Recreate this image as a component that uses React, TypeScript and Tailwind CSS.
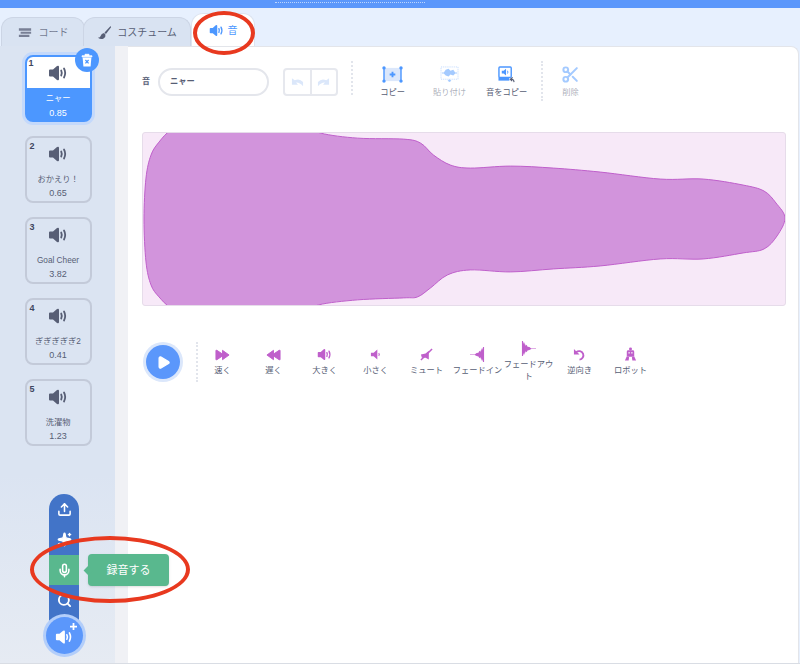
import { Scissors, Search, Sparkles, Upload, Mic, Play } from "lucide-react";

const jp = "font-['Liberation_Sans','Noto_Sans_CJK_JP',sans-serif]";

const sounds = [
  { id: 1, name: "ニャー", time: "0.85", active: true },
  { id: 2, name: "おかえり！", time: "0.65" },
  { id: 3, name: "Goal Cheer", time: "3.82" },
  { id: 4, name: "ぎぎぎぎぎ2", time: "0.41" },
  { id: 5, name: "洗濯物", time: "1.23" },
];

// outline of the waveform, smoothed below; the flat parts are clipped by the viewBox
const wavePoints = [
  [143, 219], [145, 178], [150, 155], [158, 142], [170, 130], [190, 122], [300, 124], [320, 133], [357, 138], [403, 139], [420, 143],
  [433, 155], [450, 165], [470, 168], [510, 166], [553, 168], [600, 172], [660, 179], [703, 179], [743, 185], [764, 191],
  [776, 203], [785, 218], [777, 236], [764, 249], [743, 253], [703, 259], [660, 259], [600, 266], [553, 269], [510, 272],
  [470, 270], [447, 275], [430, 288], [417, 297], [403, 298], [357, 300], [318, 305], [300, 314], [190, 316], [170, 308], [158, 297],
  [150, 285], [145, 262],
];

const smoothPath = (pts: number[][]) => {
  let d = `M${pts[0][0]} ${pts[0][1]}`;
  for (let i = 0; i < pts.length; i++) {
    const p0 = pts[(i - 1 + pts.length) % pts.length];
    const p1 = pts[i];
    const p2 = pts[(i + 1) % pts.length];
    const p3 = pts[(i + 2) % pts.length];
    d += ` C${p1[0] + (p2[0] - p0[0]) / 6} ${p1[1] + (p2[1] - p0[1]) / 6} ${p2[0] - (p3[0] - p1[0]) / 6} ${p2[1] - (p3[1] - p1[1]) / 6} ${p2[0]} ${p2[1]}`;
  }
  return d + "Z";
};

const SpeakerIcon = ({ className = "", color = "#575e75" }: { className?: string; color?: string }) => (
  <svg viewBox="0 0 20 20" className={className}>
    <path d="M1 7.5 Q1 6.5 2 6.5 H5 L9 3 Q11 2 11 4 V16 Q11 18 9 17 L5 13.5 H2 Q1 13.5 1 12.5 Z" fill={color} />
    <path d="M13.2 7.5 Q14.4 10 13.2 12.5" fill="none" stroke={color} strokeWidth="1.8" strokeLinecap="round" />
    <path d="M16 5.5 Q18.4 10 16 14.5" fill="none" stroke={color} strokeWidth="1.8" strokeLinecap="round" />
  </svg>
);

const SoundCard = ({ id, name, time, active }: { id: number; name: string; time: string; active?: boolean }) => {
  if (active) {
    return (
      <div className="relative w-[67px] h-[67px] rounded-lg border-2 border-[#4c97ff] bg-[#4c97ff] shadow-[0_0_0_3px_#c4d9fb] flex flex-col">
        <div className="relative h-[31px] bg-white rounded-t-md flex items-center justify-center">
          <span className="absolute left-[2px] top-0 text-[9px] font-bold text-[#3f4660]">{id}</span>
          <SpeakerIcon className="w-5 h-5 mt-[1px]" />
        </div>
        <div className="flex-1 flex flex-col items-center pt-[4px] text-[8.25px] leading-[14px] text-white">
          <span>{name}</span>
          <span className="text-[9px]">{time}</span>
        </div>
        <div className="absolute -right-[9px] -top-[9px] w-6 h-6 rounded-full bg-[#4c97ff] flex items-center justify-center">
          <svg viewBox="0 0 16 16" className="w-4 h-4">
            <path d="M3 3.8 H13 V4.8 H3Z M6 3.8 V2.3 H10 V3.8" fill="#fff" stroke="#fff" strokeWidth="0.8" />
            <path d="M3.6 5.6 H12.4 L11.6 14.5 H4.4 Z" fill="#fff" />
            <path d="M6.4 8 L9.6 11.4 M9.6 8 L6.4 11.4" stroke="#4c97ff" strokeWidth="1.3" />
          </svg>
        </div>
      </div>
    );
  }
  return (
    <div className="relative w-[67px] h-[67px] rounded-lg border-2 border-[#c3cad9] flex flex-col items-center">
      <span className="absolute left-[3px] top-[2px] text-[9px] font-bold text-[#3f4660]">{id}</span>
      <SpeakerIcon className="w-5 h-5 mt-[6px]" />
      <span className="mt-[10px] text-[8.25px] leading-[12px] text-[#575e75] whitespace-nowrap">{name}</span>
      <span className="mt-[1px] text-[9px] leading-[12px] text-[#575e75]">{time}</span>
    </div>
  );
};

const ToolButton = ({ label, dim, children }: { label: string; dim?: boolean; children: React.ReactNode }) => (
  <div className="w-[57px] flex flex-col items-center">
    <div className="h-[22px] flex items-center justify-center">{children}</div>
    <span className={`mt-[4px] text-[8.25px] leading-[12px] whitespace-nowrap ${dim ? "text-[#575e75]/50" : "text-[#575e75]"}`}>
      {label}
    </span>
  </div>
);

const purple = "#bf5fcb";

const effects: { label: string; icon: React.ReactNode }[] = [
  {
    label: "速く",
    icon: (
      <svg viewBox="0 0 16 12" className="w-[15px] h-3">
        <path d="M1 1 H2 L8 5 V1 L15 6 L8 11 V7 L2 11 H1Z" fill={purple} stroke={purple} strokeLinejoin="round" />
      </svg>
    ),
  },
  {
    label: "遅く",
    icon: (
      <svg viewBox="0 0 16 12" className="w-[15px] h-3">
        <path d="M15 1 H14 L8 5 V1 L1 6 L8 11 V7 L14 11 H15Z" fill={purple} stroke={purple} strokeLinejoin="round" />
      </svg>
    ),
  },
  { label: "大きく", icon: <SpeakerIcon className="w-[15px] h-[15px]" color={purple} /> },
  {
    label: "小さく",
    icon: (
      <svg viewBox="0 0 12 14" className="w-[11px] h-[13px]">
        <path d="M1 5 H4 L8 1.5 V12.5 L4 9 H1Z" fill={purple} />
        <path d="M9.5 5.5 Q10.8 7 9.5 8.5" fill="none" stroke={purple} strokeWidth="1.2" />
      </svg>
    ),
  },
  {
    label: "ミュート",
    icon: (
      <svg viewBox="0 0 14 14" className="w-[13px] h-[13px]">
        <path d="M1 7 L6 6 L9.5 3 V12.5 L6 10.5 H2Z" fill={purple} />
        <path d="M1 13 L13 1" stroke={purple} strokeWidth="1.6" />
      </svg>
    ),
  },
  {
    label: "フェードイン",
    icon: (
      <svg viewBox="0 0 16 16" className="w-[15px] h-[15px]">
        <path d="M0 8 H5 L7 6.5 L9 6 L10 4 L11 5 L12.5 1 V4 L14 0 H15 V16 H14 L12.5 12 V15 L11 11 L10 12 L9 10 L7 9.5 L5 8.6 H0Z" fill={purple} />
      </svg>
    ),
  },
  {
    label: "フェードアウト",
    icon: (
      <svg viewBox="0 0 16 16" className="w-[15px] h-[15px]">
        <path d="M16 8 H11 L9 6.5 L7 6 L6 4 L5 5 L3.5 1 V4 L2 0 H1 V16 H2 L3.5 12 V15 L5 11 L6 12 L7 10 L9 9.5 L11 8.6 H16Z" fill={purple} />
      </svg>
    ),
  },
  {
    label: "逆向き",
    icon: (
      <svg viewBox="0 0 14 14" className="w-[13px] h-[13px]">
        <path d="M1 1 V7 H7Z" fill={purple} />
        <path d="M3.5 4.5 A4.6 4.6 0 1 1 7 12.5" fill="none" stroke={purple} strokeWidth="2" />
      </svg>
    ),
  },
  {
    label: "ロボット",
    icon: (
      <svg viewBox="0 0 14 16" className="w-[13px] h-[15px]">
        <circle cx="7" cy="2" r="1.6" fill={purple} />
        <rect x="3" y="3.5" width="8" height="7" rx="1.5" fill={purple} />
        <rect x="4.8" y="5.5" width="1.4" height="1.4" fill="#fff" />
        <rect x="7.8" y="5.5" width="1.4" height="1.4" fill="#fff" />
        <path d="M3 10 L1 14.5 H5 L5.5 11 Z M11 10 L13 14.5 H9 L8.5 11 Z" fill={purple} />
      </svg>
    ),
  },
];

export default function App() {
  return (
    <div className={`relative w-[800px] h-[664px] overflow-hidden bg-[#e7f0fe] flex flex-col ${jp}`}>
      <div className="h-2 bg-[#5b97fb] pl-[275px] shrink-0">
        <div className="w-[150px] h-[3px] border-b border-dotted border-white/60" />
      </div>

      {/* tabs */}
      <div className="h-[38px] flex items-end pl-[1px] shrink-0">
        <div className="w-[84px] h-[29px] bg-[#d9e3f2] border border-b-0 border-[#ccd5e5] rounded-t-xl flex items-center justify-center gap-[7px] text-[10px] text-[#575e75]/80">
          <svg viewBox="0 0 16 12" className="w-[14px] h-[11px]">
            <path d="M1 1 H15 V4 H1Z M3 5 H15 V7.5 H3Z M1 8.5 H13 V11 H1Z" fill="#575e75" opacity="0.75" />
          </svg>
          <span>コード</span>
        </div>
        <div className="w-[108px] -ml-[2px] h-[29px] bg-[#d9e3f2] border border-b-0 border-[#ccd5e5] rounded-t-xl flex items-center justify-center gap-[5px] text-[10px] text-[#575e75]">
          <svg viewBox="0 0 16 16" className="w-[15px] h-[15px]">
            <path d="M14.5 1 L8 8 L9.5 9.5 L15 2.5Z" fill="#575e75" />
            <path d="M7.5 8.5 Q4.5 9 4 11.5 Q3.5 13.5 1 13.5 Q4 16 7 14.5 Q9.5 13 9 10Z" fill="#575e75" />
          </svg>
          <span>コスチューム</span>
        </div>
        <div className="w-[64px] h-[33px] bg-white border border-b-0 border-[#dde4f0] rounded-t-xl flex items-center justify-center gap-[4px] text-[10px] text-[#4c97ff]">
          <SpeakerIcon className="w-[15px] h-[15px]" color="#4c97ff" />
          <span>音</span>
        </div>
      </div>

      <div className="flex-1 flex min-h-0 border-b border-[#d9dde4]">
        {/* sound list */}
        <div className="relative w-[115px] bg-[#dbe4f2] flex flex-col items-center gap-[14px] pt-[9px] pl-[1px] shrink-0">
          {sounds.map((s) => (
            <SoundCard key={s.id} {...s} />
          ))}
          <div className="absolute left-0 right-0 bottom-0 h-[190px] bg-gradient-to-b from-transparent to-[#e6ebf3]" />
        </div>
        <div className="w-[13px] bg-[#f0f1f5] shrink-0" />

        {/* editor */}
        <div className="flex-1 bg-white border-t border-r border-[#e3e5ea] rounded-tr-lg mr-[1px] pl-[14px] pr-[12px] pt-[14px] flex flex-col">
          <div className="h-[50px] flex items-start">
            <div className="flex items-center h-[36px] mt-[3px]">
              <span className="text-[8px] font-bold text-[#575e75] w-[16px]">音</span>
              <div className="w-[111px] h-7 rounded-full border-2 border-[#e4e6ec] pl-[10px] flex items-center text-[8.25px] font-bold text-[#575e75]">
                ニャー
              </div>
              <div className="ml-[14px] w-[55px] h-7 rounded border-2 border-[#e6e8ee] flex">
                <div className="flex-1 border-r-2 border-[#e6e8ee] flex items-center justify-center">
                  <svg viewBox="0 0 14 10" className="w-[13px] h-[10px]">
                    <path d="M1 1 L4 3.2 Q9 0.5 13 5 L13 9.5 Q9 5 5.5 5.5 L7.5 8 H1Z" fill="#dbe7fa" />
                  </svg>
                </div>
                <div className="flex-1 flex items-center justify-center">
                  <svg viewBox="0 0 14 10" className="w-[13px] h-[10px] -scale-x-100">
                    <path d="M1 1 L4 3.2 Q9 0.5 13 5 L13 9.5 Q9 5 5.5 5.5 L7.5 8 H1Z" fill="#dbe7fa" />
                  </svg>
                </div>
              </div>
            </div>
            <div className="ml-[13px] h-[34px] border-l-2 border-dotted border-[#e2e5ec]" />
            <div className="ml-[11px] flex">
              <ToolButton label="コピー">
                <svg viewBox="0 0 22 18" className="w-[21px] h-[17px] mt-[4px]">
                  <rect x="2" y="2" width="18" height="14" fill="#dbe7fb" />
                  <path d="M2 2 V16 M20 2 V16" stroke="#4c97ff" strokeWidth="1.5" />
                  <circle cx="2" cy="2" r="1.8" fill="#4c97ff" />
                  <circle cx="20" cy="2" r="1.8" fill="#4c97ff" />
                  <circle cx="2" cy="16" r="1.8" fill="#4c97ff" />
                  <circle cx="20" cy="16" r="1.8" fill="#4c97ff" />
                  <path d="M11 6 V12 M8 9 H14" stroke="#4c97ff" strokeWidth="2" />
                </svg>
              </ToolButton>
              <ToolButton label="貼り付け" dim>
                <svg viewBox="0 0 20 18" className="w-[19px] h-[17px] mt-[4px] opacity-50">
                  <rect x="1" y="1" width="18" height="13" fill="none" stroke="#4c97ff" strokeWidth="0.7" strokeDasharray="1 1" />
                  <path d="M2 7 H4 L6 4 L9 3 L11 5 L14 4 L16 7 H18 V8 H16 L14 10 L11 9 L9 11 L6 10 L4 8 H2Z M10 14 L8 15.5 L10 17 L12 15.5Z" fill="#4c97ff" />
                </svg>
              </ToolButton>
              <ToolButton label="音をコピー">
                <svg viewBox="0 0 20 18" className="w-[19px] h-[17px] mt-[4px]">
                  <rect x="2" y="1" width="13" height="11" rx="1" fill="#fff" stroke="#4c97ff" strokeWidth="1.5" />
                  <path d="M5 5 H7 L9.5 3 V10 L7 8 H5Z" fill="#4c97ff" />
                  <path d="M11 5 Q12 6.5 11 8" stroke="#4c97ff" fill="none" />
                  <path d="M1.5 12 H13 V15.5 H1.5Z" fill="#4c97ff" />
                  <path d="M18 17 Q17.5 13.5 14.5 14 M16.5 12 L14 14 L16 16" stroke="#575e75" strokeWidth="1.2" fill="none" />
                </svg>
              </ToolButton>
            </div>
            <div className="ml-[6px] h-10 border-l-2 border-dotted border-[#e2e5ec]" />
            <div className="ml-[-1px]">
              <ToolButton label="削除" dim>
                <Scissors size={19} strokeWidth={2.5} className="text-[#4c97ff] opacity-50 mt-[4px]" />
              </ToolButton>
            </div>
          </div>

          {/* waveform */}
          <div className="mt-[21px] w-[644px] h-[174px] rounded-[3px] border border-[#e6dcea] bg-[#f7e9f8]">
            <svg viewBox="142 133 643 172" className="w-full h-full">
              <path d={smoothPath(wavePoints)} fill="#d294dc" stroke="#bf5fcb" strokeWidth="1" />
            </svg>
          </div>

          {/* effects */}
          <div className="mt-[35px] flex items-center">
            <div className="w-[34px] h-[34px] ml-[4px] rounded-full bg-[#5b97fb] shadow-[0_0_0_3px_#dbe7fb] flex items-center justify-center">
              <Play size={15} fill="#fff" className="text-white ml-[1px]" />
            </div>
            <div className="ml-[16px] h-10 border-l-2 border-dotted border-[#e2e5ec]" />
            <div className="flex items-center ml-[-1px]">
              {effects.map((e) => (
                <div key={e.label} className="w-[51px] flex flex-col items-center">
                  <div className="h-[15px] flex items-center justify-center">{e.icon}</div>
                  <span className="mt-[3px] text-[8.25px] leading-[12px] text-[#575e75] text-center">{e.label}</span>
                </div>
              ))}
            </div>
          </div>
        </div>
      </div>

      {/* add sound menu */}
      <div className="absolute left-[49px] top-[494px] w-[30px] h-[130px] rounded-t-full bg-[#4274c8] flex flex-col items-center text-white">
        <div className="h-[30px] flex items-center justify-center">
          <Upload size={15} strokeWidth={2.5} />
        </div>
        <div className="h-[31px] flex items-center justify-center">
          <Sparkles size={15} fill="#fff" />
        </div>
        <div className="h-[30px] w-full bg-[#59b88e] flex items-center justify-center">
          <Mic size={15} strokeWidth={2.5} />
        </div>
        <div className="h-[30px] flex items-center justify-center">
          <Search size={15} strokeWidth={3} />
        </div>
      </div>
      <div className="absolute left-[88px] top-[554px] w-[81px] h-8 rounded bg-[#59b88e] shadow-sm flex items-center justify-center text-[11px] text-white">
        録音する
        <div className="absolute -left-[3px] top-[13px] w-[7px] h-[7px] rotate-45 bg-[#59b88e]" />
      </div>
      <div className="absolute left-[46px] top-[617px] w-[37px] h-[37px] rounded-full bg-[#5b97fb] shadow-[0_0_0_3px_#b3cefa] flex items-center justify-center">
        <SpeakerIcon className="w-[18px] h-[18px] -ml-[2px] mt-[3px]" color="#fff" />
        <svg viewBox="0 0 8 8" className="absolute right-[6px] top-[6px] w-[7px] h-[7px]">
          <path d="M4 0 V8 M0 4 H8" stroke="#fff" strokeWidth="2" />
        </svg>
      </div>

      {/* red annotations */}
      <div className="absolute left-[193px] top-[11px] w-[62px] h-[44px] rounded-[50%] border-4 border-[#e8391f] pointer-events-none" />
      <div className="absolute left-[30px] top-[536px] w-[160px] h-[67px] rounded-[50%] border-4 border-[#e8391f] pointer-events-none" />
    </div>
  );
}
